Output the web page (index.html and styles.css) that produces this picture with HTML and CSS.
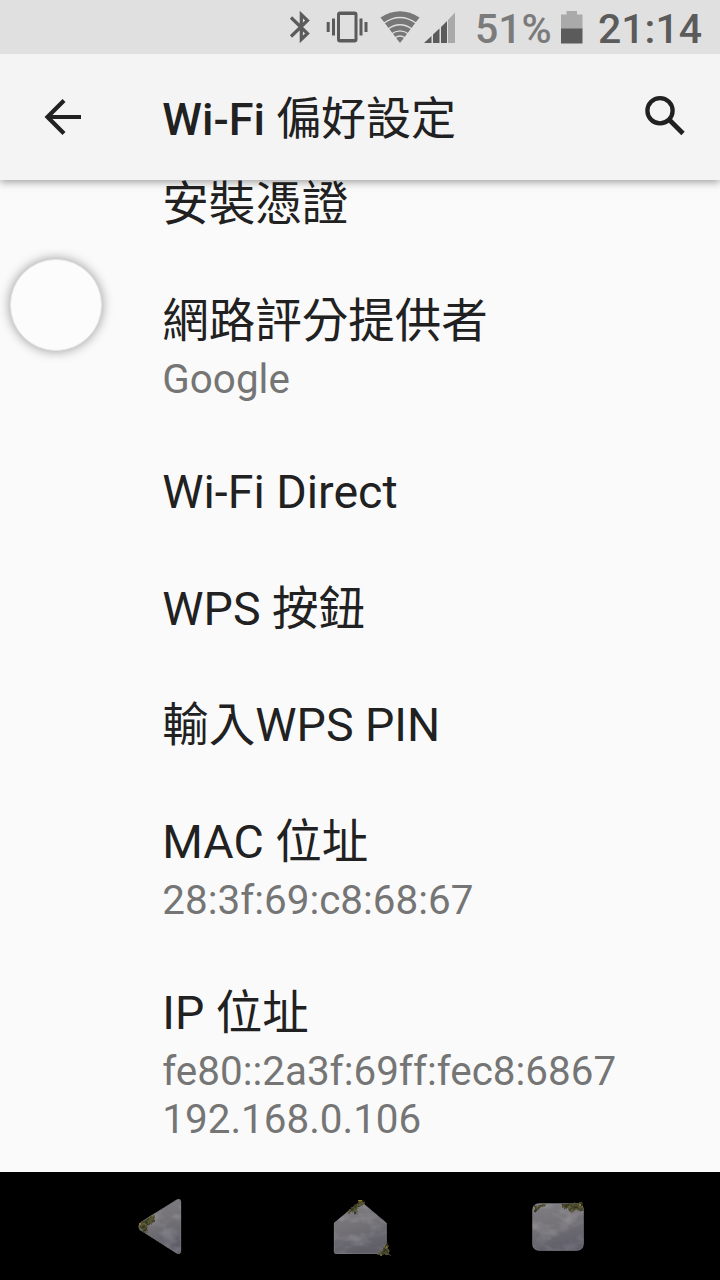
FILE: index.html
```html
<!DOCTYPE html>
<html lang="zh-Hant">
<head>
<meta charset="utf-8">
<title>Wi-Fi 偏好設定</title>
<link rel="stylesheet" href="styles.css">
</head>
<body>
<div class="screen">
  <div class="status-bar">
    <svg class="status-icons" viewBox="270 0 200 54" width="200" height="54" aria-hidden="true">
      <path d="M291 17.500 L307.500 33.500 L301.300 39.500 V14.500 L307.500 20.500 L291 36.500" fill="none" stroke="#5b5b5b" stroke-width="3.200"/>
      <g fill="#5b5b5b">
        <path fill-rule="evenodd" d="M340 11.500h14.500a3 3 0 0 1 3 3v25a3 3 0 0 1-3 3h-14.500a3 3 0 0 1-3-3v-25a3 3 0 0 1 3-3z M340 15v24h14.500v-24z"/>
        <path d="M326.700 22h3v10h-3z M332 18.500h3v17h-3z M359.500 18.500h3v17h-3z M364.500 22h3v10h-3z"/>
      </g>
      <path d="M380.500 17.500 Q400 5 419.500 17.500 L400 43z" fill="#777"/>
      <g fill="none" stroke="#e0e0e0" stroke-width="1.300">
        <path d="M384 23 Q400 12 416 23"/>
        <path d="M388 29 Q400 20.500 412 29"/>
        <path d="M391 34.300 Q400 27.500 409 34.300"/>
        <path d="M394 38.500 Q400 33.500 406 38.500"/>
      </g>
      <path d="M424 43 L431.500 36v7z M433 34.500 L439.500 28.500V43H433z M441 27 L447 21V43h-6z" fill="#5b5b5b"/>
      <path d="M448 20 L455 12.500V43h-7z" fill="#aaa"/>
    </svg>
    <span class="battery-level">51%</span>
    <svg class="battery" viewBox="0 0 22 33" width="22" height="33" aria-hidden="true">
      <path d="M0 3.500H5.500V0H16V3.500H21.500V18H0z" fill="#aaa"/>
      <path d="M0 17.500H21.500V32.500H0z" fill="#5b5b5b"/>
    </svg>
    <span class="clock">21:14</span>
  </div>

  <header class="app-bar">
    <svg class="back" viewBox="0 0 40 40" width="40" height="40" aria-hidden="true">
      <path d="M21 3.500 L4.500 20 L21 36.500 M4.500 20H38" fill="none" stroke="#212121" stroke-width="4.200"/>
    </svg>
    <h1 class="heading"><b class="latin">Wi-Fi</b> 偏好設定</h1>
    <svg class="search" viewBox="0 0 42 42" width="42" height="42" aria-hidden="true">
      <circle cx="16" cy="15.700" r="12.600" fill="none" stroke="#212121" stroke-width="4.300"/>
      <path d="M25.500 25 L39 38.500" fill="none" stroke="#212121" stroke-width="4.800"/>
    </svg>
  </header>

  <main class="content">
    <ul class="list">
      <li class="item"><div class="title">安裝憑證</div></li>
      <li class="item"><div class="title">網路評分提供者</div><div class="summary">Google</div></li>
      <li class="item"><div class="title">Wi-Fi Direct</div></li>
      <li class="item"><div class="title">WPS 按鈕</div></li>
      <li class="item"><div class="title">輸入WPS PIN</div></li>
      <li class="item"><div class="title">MAC 位址</div><div class="summary">28:3f:69:c8:68:67</div></li>
      <li class="item"><div class="title">IP 位址</div><div class="summary">fe80::2a3f:69ff:fec8:6867<br>192.168.0.106</div></li>
    </ul>
  </main>

  <nav class="nav-bar">
    <svg viewBox="0 0 720 108" width="720" height="108" aria-hidden="true">
      <defs>
        <linearGradient id="stone" x1="0" y1="0" x2="0.300" y2="1">
          <stop offset="0" stop-color="#807f83"/>
          <stop offset="0.500" stop-color="#757377"/>
          <stop offset="1" stop-color="#605f68"/>
        </linearGradient>
        <filter id="rock" x="0" y="0" width="1" height="1" color-interpolation-filters="sRGB">
          <feTurbulence type="fractalNoise" baseFrequency="0.050 0.080" numOctaves="3" seed="4"/>
          <feColorMatrix values="0.450 0 0 0 -0.205  0.450 0 0 0 -0.205  0.450 0 0 0 -0.200  0 0 0 0 1" result="n"/>
          <feComposite in="SourceGraphic" in2="n" operator="arithmetic" k2="1" k3="0.600" result="r"/>
          <feComposite in="r" in2="SourceGraphic" operator="in"/>
        </filter>
        <filter id="moss" color-interpolation-filters="sRGB">
          <feTurbulence type="fractalNoise" baseFrequency="0.350" numOctaves="2" seed="7"/>
          <feColorMatrix values="0.450 0 0 0 0.070  0.450 0 0 0 0.065  0.250 0 0 0 0.050  0 0 0 0 1" result="n"/>
          <feComposite in="n" in2="SourceGraphic" operator="in" result="m"/>
          <feTurbulence type="fractalNoise" baseFrequency="0.300" numOctaves="1" seed="3" result="w"/>
          <feDisplacementMap in="m" in2="w" scale="4" xChannelSelector="R" yChannelSelector="G"/>
        </filter>
      </defs>
      <g filter="url(#rock)" fill="url(#stone)" stroke="#828187" stroke-width="0.700">
        <path d="M139 53 Q138 56 140 58 L177 81.500 Q181 83 181 79 V30 Q181 26 177 27.500 L141 50z"/>
        <path d="M334 51 L358 31 Q361 29 364 32 L386.500 51 V80 Q386 82 384 82 H336 Q334 82 334 79z"/>
        <rect x="532.500" y="31.500" width="51" height="47" rx="6"/>
      </g>
      <g fill="#56532e" filter="url(#moss)">
        <path d="M140 51 L155 42 L154 50 L147 54 L149 59 L143 60 L139 56z"/>
        <path d="M348 39 L357 31 L362 28 L365 32 L357 36 L356 43 L353 39 L349 42z"/>
        <path d="M388 69 L390 83 L378 83 L382 78z"/>
        <path d="M535 34 L547 31 L545 34 L540 36 L535 41z M562 32 L582 31 L584 39 L577 38 L571 41 L568 37 L562 36z"/>
      </g>
      <path d="M139 51h2v2h-2z M358 28h4v1.500h-4z M579 32h2v2h-2z M386 74h1.500v2h-1.500z" fill="#8a7628"/>
    </svg>
  </nav>

  <div class="assist-button"></div>
</div>
</body>
</html>
```
FILE: styles.css
```css
* { box-sizing: border-box; }

body {
  margin: 0;
  background: #fafafa;
  font-family: Roboto, "Noto Sans CJK TC", sans-serif;
  color: #212121;
}

.screen {
  position: relative;
  display: flex;
  flex-direction: column;
  width: 720px;
  height: 1280px;
  overflow: hidden;
}

.status-bar {
  position: relative;
  z-index: 2;
  display: flex;
  flex: none;
  align-items: center;
  height: 54px;
  padding-left: 270px;
  background: #e0e0e0;
  font-size: 41px;
  font-weight: 500;
  line-height: 54px;
  white-space: nowrap;
}

.status-icons { flex: none; }

.battery-level {
  width: 85px;
  margin-left: 5px;
  padding-top: 4px;
  color: #7b7b7b;
}

.battery {
  flex: none;
  margin-left: 1px;
}

.clock {
  margin-left: 15px;
  padding-top: 4px;
  color: #5b5b5b;
}

.app-bar {
  position: relative;
  z-index: 1;
  display: flex;
  flex: none;
  align-items: center;
  height: 126px;
  padding: 0 34px 0 43px;
  background: #f4f4f4;
  box-shadow: 0 2px 8px rgba(0, 0, 0, 0.38);
}

.search { margin-bottom: 2px; }

.heading {
  flex: 1;
  margin: 0 0 0 79.3px;
  padding-top: 5px;
  font-size: 45px;
  font-weight: 400;
  line-height: 54px;
}

.latin { font-weight: 500; }

.content {
  flex: 1;
  min-height: 0;
  overflow: hidden;
}

.list {
  margin: -34.2px 0 0;
  padding: 0 0 0 162.3px;
  list-style: none;
}

.item { padding: 31.25px 0; }

.title {
  font-size: 46.5px;
  line-height: 54px;
  white-space: nowrap;
}

.summary {
  margin: 8px 0 -1px;
  color: #757575;
  font-size: 40.4px;
  line-height: 48px;
}

.nav-bar {
  flex: none;
  height: 108px;
  background: #000;
}

.nav-bar svg { display: block; }

.assist-button {
  position: absolute;
  top: 259px;
  left: 10px;
  width: 92px;
  height: 92px;
  border: 1px solid #e6e6e6;
  border-radius: 50%;
  background: #fcfcfc;
  box-shadow: 0 0 12px rgba(0, 0, 0, 0.4);
}
```
